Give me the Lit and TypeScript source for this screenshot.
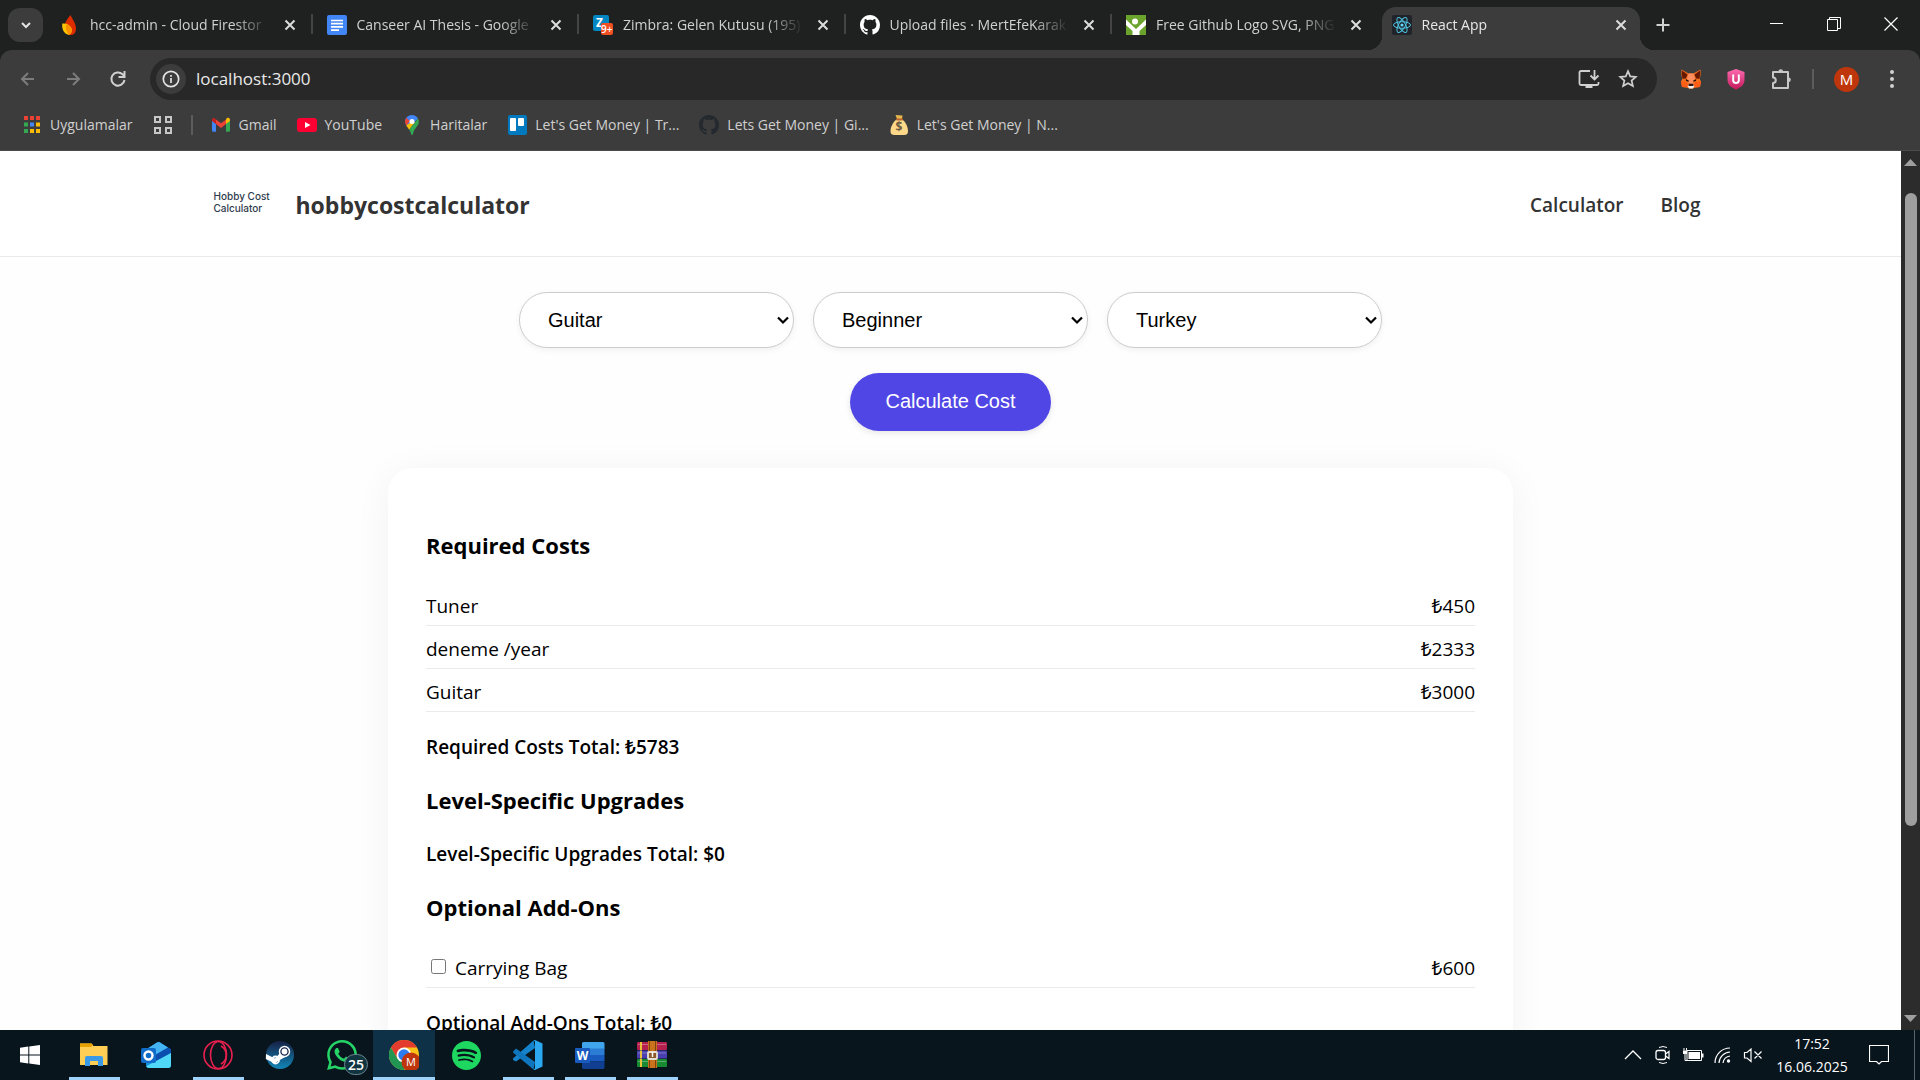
import { LitElement, html, css, svg, nothing, TemplateResult, SVGTemplateResult } from "lit";
import { customElement, state } from "lit/decorators.js";
import { classMap } from "lit/directives/class-map.js";

const icon = (w: number, h: number, viewBox: string, body: SVGTemplateResult): TemplateResult =>
  html`<svg class="icon" width=${w} height=${h} viewBox=${viewBox} aria-hidden="true">${body}</svg>`;

const GITHUB =
  "M8 0C3.58 0 0 3.58 0 8c0 3.54 2.29 6.53 5.47 7.59.4.07.55-.17.55-.38 0-.19-.01-.82-.01-1.49-2.01.37-2.53-.49-2.69-.94-.09-.23-.48-.94-.82-1.13-.28-.15-.68-.52-.01-.53.63-.01 1.08.58 1.23.82.72 1.21 1.87.87 2.33.66.07-.52.28-.87.51-1.07-1.78-.2-3.64-.89-3.64-3.95 0-.87.31-1.59.82-2.15-.08-.2-.36-1.02.08-2.12 0 0 .67-.21 2.2.82.64-.18 1.32-.27 2-.27s1.36.09 2 .27c1.53-1.04 2.2-.82 2.2-.82.44 1.1.16 1.92.08 2.12.51.56.82 1.27.82 2.15 0 3.07-1.87 3.75-3.65 3.95.29.25.54.73.54 1.48 0 1.07-.01 1.93-.01 2.2 0 .21.15.46.55.38A8.01 8.01 0 0 0 16 8c0-4.42-3.58-8-8-8z";

const firebase = icon(20, 20, "0 0 20 20", svg`
  <path d="M10.500 0C7 4 5 7.500 4.500 11c-.5 5 2 8.500 5.500 9 4 .3 6-2.500 6-6.500 0-5-3.500-9-5.500-13.500z" fill="#dd2c00"/>
  <path d="M2.300 8.500C1.500 14 4 19 8.500 19.800c2.500-.8 3.800-3 3.300-5.800C10.500 10 7 8 2.300 8.500z" fill="#ffc400"/>
  <path d="M6 9.200c3.500 1 5.500 3 5.800 5.300.2 2.500-1 4.500-2.800 5.400C6.500 17.500 5.200 13.500 6 9.200z" fill="#ff9100"/>`);
const docs = icon(20, 20, "0 0 20 20", svg`
  <rect width="20" height="20" rx="2" fill="#4285f4"/>
  <path d="M4 5.500h12M4 8.700h12M4 11.900h12M4 15.100h8" stroke="#fff" stroke-width="1.700"/>`);
const zimbra = icon(20, 20, "0 0 20 20", svg`
  <rect width="16" height="16" rx="2" fill="#0087c3"/>
  <text x="3" y="12" font-family="Open Sans, sans-serif" font-weight="700" font-size="12" fill="#fff">Z</text>
  <rect x="8" y="8" width="12" height="12" rx="2" fill="#f04e23"/>
  <text x="8" y="18" font-family="Open Sans, sans-serif" font-weight="600" font-size="10" fill="#fff">9+</text>`);
const githubIcon = (fill: string) => icon(20, 20, "0 0 16 16", svg`<path d=${GITHUB} fill=${fill}/>`);
const vecteezy = icon(20, 20, "0 0 20 20", svg`
  <rect width="20" height="20" fill="#6ba42c"/>
  <path d="M0 4.500L10 14l10-9.500V10l-6.500 6v4h-7v-4L0 10z" fill="#fff"/>
  <circle cx="9" cy="6.500" r="3" fill="#fff"/>`);
const react = icon(20, 20, "0 0 20 20", svg`
  <rect width="20" height="20" rx="2" fill="#20232a"/>
  <g fill="none" stroke="#4fc4e0" stroke-width="1">
    <ellipse cx="10" cy="10" rx="8.500" ry="3.300"/>
    <ellipse cx="10" cy="10" rx="8.500" ry="3.300" transform="rotate(60 10 10)"/>
    <ellipse cx="10" cy="10" rx="8.500" ry="3.300" transform="rotate(120 10 10)"/>
  </g><circle cx="10" cy="10" r="1.600" fill="#61dafb"/>`);

const cross = icon(20, 20, "0 0 20 20", svg`<path d="M5.500 5.500l9 9M14.500 5.500l-9 9" stroke="#dcdcdc" stroke-width="2"/>`);

const appsGrid = icon(20, 20, "0 0 20 20", svg`
  ${[["#ea4335", "#ea4335", "#ea4335"], ["#34a853", "#4285f4", "#fbbc04"], ["#34a853", "#fbbc04", "#fbbc04"]].map((row, r) =>
    row.map((c, i) => svg`<rect x=${2 + i * 6} y=${1 + r * 6.5} width="4" height="4" fill=${c}/>`))}`);
const tabGroups = icon(20, 20, "0 0 20 20", svg`
  <g fill="none" stroke="#c7c7c7" stroke-width="2"><path d="M2 2h5v5H2zM13 2h5v5h-5zM2 13h5v5H2zM13 13h5v5h-5z"/></g>`);
const gmail = icon(20, 20, "0 0 20 20", svg`
  <path d="M1 5.500v10c0 .7.500 1.200 1.200 1.200H5V9z" fill="#4285f4"/>
  <path d="M15 16.700h2.800c.7 0 1.200-.5 1.200-1.200v-10L15 9z" fill="#34a853"/>
  <path d="M15 4.500V9l4-3V4.800c0-1.800-2-2.500-3.300-1.500z" fill="#fbbc04"/>
  <path d="M5 9V4.500l5 3.800 5-3.800V9l-5 3.900z" fill="#ea4335"/>
  <path d="M1 4.800V6l4 3V4.500l-.7-.8C3 2.500 1 3 1 4.800z" fill="#c5221f"/>`);
const youtube = icon(20, 20, "0 0 20 20", svg`
  <rect y="3" width="20" height="14" rx="3" fill="#ff0033"/><path d="M8 7l5.500 3L8 13z" fill="#fff"/>`);
const maps = icon(20, 20, "0 0 20 20", svg`
  <path d="M10 0c2.500 0 4.800 1.200 6 3.500L7 13C5.500 10.800 3 9 3 6.500 3 3 6 0 10 0z" fill="#4285f4"/>
  <path d="M4.300 2.800L8 6l-3.800 4.500C3.300 9 2.900 7.500 3 6.300c.1-1.300.6-2.500 1.300-3.500z" fill="#ea4335"/>
  <path d="M7.800 8L4.200 10.500c.9 1.400 2 2.700 3 4.200L13 7z" fill="#fbbc04"/>
  <path d="M16 3.500c.7 1.200 1 2.500.8 4-.5 3.500-3.800 5.500-5.300 9.500-.4 1.200-.6 3-1.500 3s-1-1.500-1.500-3c-.4-1-.8-1.600-1.300-2.300z" fill="#34a853"/>
  <circle cx="10" cy="6.500" r="2.500" fill="#fff"/>`);
const trello = icon(20, 20, "0 0 20 20", svg`
  <rect x="1" width="19" height="20" rx="2" fill="#0079bf"/>
  <rect x="3" y="3" width="6" height="13" rx="1" fill="#fff"/><rect x="11" y="3" width="6" height="8" rx="1" fill="#fff"/>`);
const moneybag = icon(20, 20, "0 0 20 20", svg`
  <path d="M6.500 0l7 .5L13 4H8z" fill="#e6b74c"/><path d="M8 4h5c4 3.500 6 8 6 12 0 3-1.500 4-4 4H5.500C3 20 1.500 19 1.500 16c0-4 2.500-9 6.500-12z" fill="#fdd888"/>
  <rect x="7" y="3.500" width="7" height="2" rx="1" fill="#b8642f"/>
  <text x="6.500" y="16" font-family="Open Sans, sans-serif" font-weight="700" font-size="12" fill="#6b5c43">$</text>`);

interface Tab { title: string; icon: TemplateResult; active?: boolean }
const TABS: Tab[] = [
  { title: "hcc-admin - Cloud Firestor", icon: firebase },
  { title: "Canseer AI Thesis - Google", icon: docs },
  { title: "Zimbra: Gelen Kutusu (195)", icon: zimbra },
  { title: "Upload files · MertEfeKarak", icon: githubIcon("#fff") },
  { title: "Free Github Logo SVG, PNG", icon: vecteezy },
  { title: "React App", icon: react, active: true },
];

@customElement("browser-bar")
export class BrowserBar extends LitElement {
  static styles = css`
    :host { display: block; background: #1f2120; color: #d0d0d0; font: 14px/20px "Open Sans", "Noto Sans", sans-serif; }
    button { border: 0; background: none; padding: 0; display: grid; place-items: center; flex: none; color: inherit; font: inherit; }
    .icon { display: block; flex: none; }
    .strip { display: flex; height: 50px; }
    .search { width: 35px; height: 34px; margin: 8px 3px 0 8px; border-radius: 12px; background: #3c3c3c; }
    .tabs { display: flex; flex: 0 1 1599px; min-width: 0; }
    .tab { display: flex; align-items: center; flex: 1 1 0; min-width: 0; height: 50px; box-sizing: border-box; padding: 0 11px 0 14px; }
    .tab.ruled { border-right: 2px solid; border-image: linear-gradient(transparent 14px, #444 14px, #444 34px, transparent 34px) 1; }
    .title { flex: 1; min-width: 0; margin: 0 10px; white-space: nowrap; overflow: hidden; -webkit-mask-image: linear-gradient(90deg, #000 80%, transparent); }
    .tab.active { position: relative; margin: 7px 5px 0 5px; padding: 0 9px 14px 10px; background: #3c3c3c; border-radius: 14px 14px 0 0; color: #e8e8e8; }
    .tab.active::before, .tab.active::after { content: ""; position: absolute; bottom: 7px; width: 14px; height: 14px; }
    .tab.active::before { right: 100%; background: radial-gradient(circle at 0 0, transparent 14px, #3c3c3c 14px); }
    .tab.active::after { left: 100%; background: radial-gradient(circle at 100% 0, transparent 14px, #3c3c3c 14px); }
    .plus { width: 36px; height: 50px; }
    .controls { display: flex; margin: 0 1px 0 auto; }
    .controls button { width: 57px; height: 48px; }
    .panel { background: #3c3c3c; border-radius: 12px 12px 0 0; border-bottom: 1px solid #4a4a4a; }
    .toolbar { display: flex; align-items: center; height: 58px; padding: 0 9px 0 5px; }
    .toolbar button { width: 45px; height: 42px; }
    .address { display: flex; align-items: center; flex: 1; height: 42px; margin: 0 11px 0 10px; padding: 0 10px 0 6px; box-sizing: border-box; border-radius: 21px; background: #282828; }
    .toolbar .info { width: 30px; height: 30px; border-radius: 15px; background: #3c3c3c; }
    .toolbar .small { width: 39px; }
    .url { flex: 1; min-width: 0; margin-left: 10px; padding: 0; border: 0; outline: 0; background: none; color: #e8e8e8; font: 17px/24px "Open Sans", "Noto Sans", sans-serif; }
    .rule { width: 2px; height: 20px; background: #5c5c5c; }
    .toolbar .rule { margin: 0 9px; }
    .toolbar .avatar { width: 25px; height: 25px; margin: 0 13px 0 11px; border-radius: 13px; background: #bf360c; color: #fff; font-size: 15px; }
    .marks { display: flex; align-items: center; height: 42px; box-sizing: border-box; gap: 20px; padding: 0 22px 8px; }
    .marks .rule { margin: 0 -2px; }
    .marks a { display: flex; align-items: center; gap: 8px; color: #d0d0d0; text-decoration: none; white-space: nowrap; }
  `;

  render() {
    return html`
      <div class="strip">
        <button class="search" aria-label="Search tabs">${icon(16, 16, "0 0 16 16", svg`<path d="M4 6l4 4 4-4" fill="none" stroke="#e3e3e3" stroke-width="2"/>`)}</button>
        <div class="tabs">
          ${TABS.map((t, i) => html`<div class=${classMap({ tab: true, active: !!t.active, ruled: i < 4 })}>
            ${t.icon}<span class="title">${t.title}</span><button aria-label="Close tab">${cross}</button></div>`)}
        </div>
        <button class="plus" aria-label="New tab">${icon(20, 20, "0 0 20 20", svg`<path d="M10 3.500v13M3.500 10h13" stroke="#d0d0d0" stroke-width="2"/>`)}</button>
        <div class="controls">
          <button aria-label="Minimize">${icon(14, 14, "0 0 14 14", svg`<path d="M0 6.500h13" stroke="#fff"/>`)}</button>
          <button aria-label="Restore">${icon(14, 14, "0 0 14 14", svg`<path d="M.5 2.500h10v11H.5zM2.500 2.500v-2h11v11h-3" fill="none" stroke="#fff"/>`)}</button>
          <button aria-label="Close window">${icon(14, 14, "0 0 14 14", svg`<path d="M.5.5l13 13M13.500.5l-13 13" stroke="#fff" stroke-width="1.200"/>`)}</button>
        </div>
      </div>
      <div class="panel">
        <div class="toolbar">
          <button aria-label="Back">${icon(20, 20, "0 0 20 20", svg`<path d="M16 10H4M10 4l-6 6 6 6" fill="none" stroke="#7c7c7c" stroke-width="2"/>`)}</button>
          <button aria-label="Forward">${icon(20, 20, "0 0 20 20", svg`<path d="M4 10h12M10 4l6 6-6 6" fill="none" stroke="#7c7c7c" stroke-width="2"/>`)}</button>
          <button aria-label="Reload">${icon(20, 20, "0 0 20 20", svg`<path d="M16.500 11a6.600 6.600 0 1 1-2-5.800L16.500 7.500M16.500 2v6h-6" fill="none" stroke="#d0d0d0" stroke-width="2"/>`)}</button>
          <div class="address">
            <button class="info" aria-label="Site information">${icon(20, 20, "0 0 20 20", svg`<circle cx="10" cy="10" r="7.700" fill="none" stroke="#e3e3e3" stroke-width="1.700"/><path d="M10 9v5M10 6v1.800" stroke="#e3e3e3" stroke-width="1.700"/>`)}</button>
            <input class="url" aria-label="Address" value="localhost:3000" />
            <button class="small" aria-label="Install app">${icon(22, 20, "0 0 22 20", svg`<path d="M12 2H3a1.500 1.500 0 0 0-1.500 1.500v11A1.500 1.500 0 0 0 3 16h16a1.500 1.500 0 0 0 1.500-1.500V13M16.500 1v9M12.500 6.500l4 4 4-4" fill="none" stroke="#d0d0d0" stroke-width="1.800"/><path d="M7.500 16h7v3h-7z" fill="#d0d0d0"/>`)}</button>
            <button class="small" aria-label="Bookmark">${icon(20, 20, "0 0 20 20", svg`<path d="M10 2.200l2.200 5.200 5.600.5-4.200 3.700 1.300 5.500L10 14.200l-4.900 2.900 1.300-5.500L2.200 7.900l5.600-.5z" fill="none" stroke="#d0d0d0" stroke-width="1.700"/>`)}</button>
          </div>
          <button aria-label="MetaMask">${icon(20, 20, "0 0 20 20", svg`
            <path d="M.5.5L7.500 4.500h5l7-4 .2 5-1 4.500 1.300 2.500-1 5.500-4.500.5L12 19.500H8L5.500 18.500 1 18l-1-5.500L1.300 10l-1-4.500z" fill="#f5701f"/>
            <path d="M1 1.500l5.500 4-1.500 4-3.500.3L.8 5.500zM19 1.500l-5.500 4 1.500 4 3.500.3.700-4.300z" fill="#661800"/>
            <path d="M7.500 4.500h5l1.300 5L12 15H8L6.200 9.500z" fill="#ff8d5d"/>
            <path d="M4.800 10l3.200 1.800-.5 1-2.500-.8zM15.200 10L12 11.800l.5 1 2.500-.8z" fill="#2b120c"/>
            <path d="M0 12.500l5.500.5L8 17l-2.500 1.500L1 18zM20 12.500l-5.500.5L12 17l2.500 1.500 4.500-.5z" fill="#ff5c16"/>
            <path d="M6.500 17L8 15.500h4l1.500 1.500-1.700 2.500H8.200z" fill="#f3ece9"/><path d="M7.800 14.800h4.400L12.500 17h-5z" fill="#2b1712"/>`)}</button>
          <button aria-label="Shield">${icon(18, 22, "0 0 18 22", svg`
            <defs><linearGradient id="pink" x2="0" y2="1"><stop stop-color="#ff6bb0"/><stop offset="1" stop-color="#c2185b"/></linearGradient></defs>
            <path d="M9 1l8.500 3v8c0 5-4 7.500-8.500 9.700C4.500 19.500.5 17 .5 12V4z" fill="url(#pink)"/>
            <path d="M6.200 6.500v5.700a2.800 2.800 0 0 0 5.600 0V6.500" fill="none" stroke="#fff" stroke-width="2"/>`)}</button>
          <button aria-label="Extensions">${icon(22, 22, "0 0 22 22", svg`<path d="M3 4h15v16H3v-5a2.800 2.800 0 0 0 0-5.600z" fill="none" stroke="#c7c7c7" stroke-width="2" stroke-linejoin="round"/><path d="M8.500 3.500a2.300 2.300 0 0 1 4.600 0zM18.500 9.500v4.600a2.300 2.300 0 0 0 0-4.600z" fill="#c7c7c7"/>`)}</button>
          <div class="rule"></div>
          <button class="avatar" aria-label="Profile">M</button>
          <button class="small" aria-label="Menu">${icon(20, 20, "0 0 20 20", svg`<g fill="#d0d0d0"><circle cx="10" cy="3" r="2"/><circle cx="10" cy="10" r="2"/><circle cx="10" cy="17" r="2"/></g>`)}</button>
        </div>
        <nav class="marks" aria-label="Bookmarks">
          <a href="#">${appsGrid}Uygulamalar</a>
          <button aria-label="Tab groups">${tabGroups}</button>
          <div class="rule"></div>
          <a href="#">${gmail}Gmail</a>
          <a href="#">${youtube}YouTube</a>
          <a href="#">${maps}Haritalar</a>
          <a href="#">${trello}Let's Get Money | Tr...</a>
          <a href="#">${githubIcon("#24292f")}Lets Get Money | Gi...</a>
          <a href="#">${moneybag}Let's Get Money | N...</a>
        </nav>
      </div>`;
  }
}

interface Cost { name: string; price: string }
const REQUIRED: Cost[] = [
  { name: "Tuner", price: "₺450" },
  { name: "deneme /year", price: "₺2333" },
  { name: "Guitar", price: "₺3000" },
];
const CHOICES = [
  { label: "Hobby", options: ["Guitar"] },
  { label: "Level", options: ["Beginner"] },
  { label: "Country", options: ["Turkey"] },
];

@customElement("cost-page")
export class CostPage extends LitElement {
  static styles = css`
    :host { display: flex; min-height: 0; overflow: hidden; background: #fefefe; color: #000; font: 19px/26px "Open Sans", "Noto Sans", sans-serif; }
    .page { flex: 1; min-width: 0; }
    .header { background: #fff; border-bottom: 1px solid #eaeaea; }
    .inner { display: flex; align-items: center; height: 105px; max-width: 1500px; margin: 0 auto; box-sizing: border-box; padding: 2px 0 0 13px; color: #333; }
    .logo { width: 82px; padding-bottom: 6px; color: #2f3b4c; font: 500 10px/12px Inter, sans-serif; }
    .brand { flex: 1; font-size: 23px; line-height: 32px; font-weight: 700; }
    .nav { display: flex; gap: 37px; }
    .nav a { color: #333; text-decoration: none; font-weight: 600; }
    .choices { display: flex; flex-wrap: wrap; justify-content: center; gap: 19px; padding: 35px 0 25px; }
    .choice { display: grid; width: 275px; }
    .choice > * { grid-area: 1 / 1; }
    .choice select { appearance: none; height: 56px; padding: 0 28px; border: 1px solid #ccc; border-radius: 28px; background: #fff; color: #000; box-shadow: 0 2px 6px rgba(0, 0, 0, 0.06); font: 20px/24px "Liberation Sans", Arial, sans-serif; }
    .choice .icon { place-self: center end; margin-right: 5px; pointer-events: none; }
    .calc { display: block; height: 58px; margin: 0 auto 37px; padding: 0 35px 2px; border: 0; border-radius: 29px; background: #4f46e5; color: #fff; box-shadow: 0 2px 6px rgba(0, 0, 0, 0.1); font: 20px/24px "Liberation Sans", Arial, sans-serif; }
    .card { max-width: 1125px; margin: 0 auto; box-sizing: border-box; padding: 61px 38px 60px; border-radius: 25px; background: #fff; box-shadow: 0 5px 38px rgba(0, 0, 0, 0.05); }
    h3 { margin: 0; font-size: 22px; line-height: 32px; font-weight: 700; }
    .list { margin: 22px 0 0; padding: 0; list-style: none; }
    .list li { display: flex; justify-content: space-between; padding: 10px 0 6px; border-bottom: 1px solid #eaeaea; }
    .total { margin: 22px 0 24px; font-weight: 600; }
    h3 + .total { margin-top: 25px; }
    .addon { display: flex; align-items: center; gap: 9px; }
    .addon input { width: 15px; height: 15px; margin: 0 0 4px 5px; }
    .scroll { display: flex; flex-direction: column; align-items: center; justify-content: space-between; width: 19px; padding: 8px 0; box-sizing: border-box; background: #2c2c2c; }
    .track { flex: 1; width: 12px; padding-top: 27px; }
    .thumb { height: 77%; border-radius: 6px; background: #9f9f9f; }
  `;

  @state() private carryingBag = false;

  render() {
    return html`
      <div class="page">
        <header class="header"><div class="inner">
          <div class="logo">Hobby Cost<br />Calculator</div>
          <div class="brand">hobbycostcalculator</div>
          <nav class="nav"><a href="#">Calculator</a><a href="#">Blog</a></nav>
        </div></header>
        <div class="choices">
          ${CHOICES.map((c) => html`<label class="choice">
            <select aria-label=${c.label}>${c.options.map((o) => html`<option>${o}</option>`)}</select>
            ${icon(12, 10, "0 0 12 10", svg`<path d="M1 2.500l5 5 5-5" fill="none" stroke="#000" stroke-width="2.200"/>`)}
          </label>`)}
        </div>
        <button class="calc">Calculate Cost</button>
        <main class="card">
          <h3>Required Costs</h3>
          <ul class="list">${REQUIRED.map((c) => html`<li><span>${c.name}</span><span>${c.price}</span></li>`)}</ul>
          <p class="total">Required Costs Total: ₺5783</p>
          <h3>Level-Specific Upgrades</h3>
          <p class="total">Level-Specific Upgrades Total: $0</p>
          <h3>Optional Add-Ons</h3>
          <ul class="list"><li>
            <label class="addon"><input type="checkbox" .checked=${this.carryingBag}
              @change=${() => (this.carryingBag = !this.carryingBag)} />Carrying Bag</label>
            <span>₺600</span>
          </li></ul>
          <p class="total">Optional Add-Ons Total: ${this.carryingBag ? "₺600" : "₺0"}</p>
        </main>
      </div>
      <div class="scroll" aria-hidden="true">
        ${icon(13, 7, "0 0 13 7", svg`<path d="M0 7L6.500 0 13 7z" fill="#9f9f9f"/>`)}
        <div class="track"><div class="thumb"></div></div>
        ${icon(13, 7, "0 0 13 7", svg`<path d="M0 0l6.500 7L13 0z" fill="#9f9f9f"/>`)}
      </div>`;
  }
}

const WHATSAPP =
  "M17.472 14.382c-.297-.149-1.758-.867-2.030-.967-.273-.099-.471-.148-.67.15-.197.297-.767.966-.94 1.164-.173.199-.347.223-.644.075-.297-.15-1.255-.463-2.390-1.475-.883-.788-1.480-1.761-1.653-2.059-.173-.297-.018-.458.13-.606.134-.133.298-.347.446-.52.149-.174.198-.298.298-.497.099-.198.05-.371-.025-.52-.075-.149-.669-1.612-.916-2.207-.242-.579-.487-.5-.669-.51-.173-.008-.371-.01-.57-.01-.198 0-.52.074-.792.372-.272.297-1.040 1.016-1.040 2.479 0 1.462 1.065 2.875 1.213 3.074.149.198 2.096 3.200 5.077 4.487.709.306 1.262.489 1.694.625.712.227 1.360.195 1.871.118.571-.085 1.758-.719 2.006-1.413.248-.694.248-1.289.173-1.413-.074-.124-.272-.198-.57-.347m-5.421 7.403h-.004a9.870 9.870 0 0 1-5.031-1.378l-.361-.214-3.741.982.998-3.648-.235-.374a9.860 9.860 0 0 1-1.510-5.260c.001-5.450 4.436-9.884 9.888-9.884 2.640 0 5.122 1.030 6.988 2.898a9.825 9.825 0 0 1 2.893 6.994c-.003 5.450-4.437 9.884-9.885 9.884m8.413-18.297A11.815 11.815 0 0 0 12.050 0C5.495 0 .16 5.335.157 11.892c0 2.096.547 4.142 1.588 5.945L.057 24l6.305-1.654a11.882 11.882 0 0 0 5.683 1.448h.005c6.554 0 11.890-5.335 11.893-11.893a11.821 11.821 0 0 0-3.480-8.413z";
const SPOTIFY =
  "M12 0C5.400 0 0 5.400 0 12s5.400 12 12 12 12-5.400 12-12S18.660 0 12 0zm5.521 17.340c-.24.359-.66.48-1.021.24-2.820-1.740-6.360-2.101-10.561-1.141-.418.122-.779-.179-.899-.539-.12-.421.18-.78.54-.9 4.560-1.021 8.520-.6 11.640 1.320.42.18.479.659.301 1.020zm1.440-3.300c-.301.42-.841.6-1.262.3-3.239-1.980-8.159-2.580-11.939-1.380-.479.12-1.020-.12-1.140-.6-.12-.48.12-1.021.6-1.141C9.600 9.900 15 10.561 18.720 12.840c.361.181.54.78.241 1.200zm.12-3.360C15.240 8.400 8.820 8.160 5.160 9.301c-.6.179-1.200-.181-1.380-.721-.18-.601.18-1.200.72-1.381 4.260-1.260 11.280-1.020 15.721 1.621.539.3.719 1.020.419 1.560-.299.421-1.020.599-1.559.3z";

interface TaskApp { name: string; art: TemplateResult; open?: boolean; focused?: boolean; badge?: string }
const APPS: TaskApp[] = [
  { name: "File Explorer", open: true, art: icon(30, 30, "0 0 30 30", svg`
    <path d="M1 3.500h11.500L14.500 6H28.500V25H1z" fill="#ffcf55"/>
    <path d="M1 3.500h11.500L14 5 12 7H1z" fill="#e8a200"/><path d="M6 26V18a2 2 0 0 1 2-2h14a2 2 0 0 1 2 2v8h-5v-5h-8v5z" fill="#3a9ae8"/>`) },
  { name: "Outlook", art: icon(30, 30, "0 0 30 30", svg`
    <path d="M5 9.500L16 2.500q1.500-1 3 0L30 9.500V25a3 3 0 0 1-3 3H8a3 3 0 0 1-3-3z" fill="#1490df"/>
    <path d="M16 2.500q1.500-1 3 0L27 7.500 14 15 5 9.500z" fill="#45b4f2"/><path d="M27 7.500l3 2V13L15 22v-7.500z" fill="#0b4fae"/>
    <path d="M30 13v12a3 3 0 0 1-3 3H8q-2 0-2.800-1.700z" fill="#4fd8f7"/>
    <rect y="8" width="15" height="15" rx="2" fill="#0f6cc9"/><circle cx="7.500" cy="15.500" r="4" fill="none" stroke="#fff" stroke-width="2.400"/>`) },
  { name: "Opera", open: true, art: icon(30, 30, "0 0 30 30", svg`
    <g fill="none" stroke="#e8204e" stroke-width="1.600"><circle cx="15" cy="15" r="14"/><ellipse cx="15.500" cy="15" rx="8" ry="13.500"/><path d="M18 6c7 4 7 14 0 18"/></g>`) },
  { name: "Steam", art: icon(30, 30, "0 0 30 30", svg`
    <defs><linearGradient id="steam" x2="0" y2="1"><stop stop-color="#172044"/><stop offset="1" stop-color="#1287b8"/></linearGradient></defs>
    <circle cx="15" cy="15" r="14" fill="url(#steam)"/><path d="M1 14l9 4.500L16 12l6 4-9 5-3 2.500L.8 19z" fill="#fff"/>
    <circle cx="19.500" cy="11.500" r="5" fill="#1a2a50" stroke="#fff" stroke-width="1.500"/><circle cx="19.500" cy="11.500" r="2.900" fill="#fff"/>
    <circle cx="10.500" cy="20" r="3.500" fill="none" stroke="#fff" stroke-width="1.800"/>`) },
  { name: "WhatsApp", badge: "25", art: icon(30, 30, "0 0 24 24", svg`<path d=${WHATSAPP} fill="#25d366"/>`) },
  { name: "Chrome", open: true, focused: true, art: icon(30, 30, "0 0 30 30", svg`
    <circle cx="15" cy="15" r="15" fill="#fbc116"/>
    <path d="M2 7.500A15 15 0 0 1 28 7.500H15L8.500 18.700z" fill="#e33b2e"/><path d="M2 7.500A15 15 0 0 0 15 30l6.500-11.300H8.500z" fill="#219653"/>
    <circle cx="15" cy="15" r="7.500" fill="#fff"/><circle cx="15" cy="15" r="5.700" fill="#2b7cf0"/>
    <circle cx="22" cy="22" r="9.500" fill="#bf360c"/>
    <text x="22" y="26" text-anchor="middle" font-family="Open Sans, sans-serif" font-size="11" fill="#fff">M</text>`) },
  { name: "Spotify", art: icon(29, 29, "0 0 24 24", svg`<path d=${SPOTIFY} fill="#1ed760"/>`) },
  { name: "Visual Studio Code", open: true, art: icon(30, 30, "0 0 30 30", svg`
    <path d="M0 18.500L20.500.5 22 8 3 21.500 0 20z" fill="#1583cc"/>
    <path d="M0 11.500L3 8.500 22 22l-1.500 7.500L0 12.500z" fill="#0f76bd"/><path d="M20.500.3q1-.6 2 0L29.500 3.500v23l-7 3.200q-1 .5-2 0 1.500-.7 1.500-2.200V2.500Q22 1 20.500.3z" fill="#2ba8ef"/>`) },
  { name: "Word", open: true, art: icon(30, 30, "0 0 30 30", svg`
    <path d="M8.500 2H28a1.500 1.500 0 0 1 1.500 1.500V9H7V3.500A1.500 1.500 0 0 1 8.500 2z" fill="#41a5ee"/><path d="M7 8.500h22.500v6.500H7z" fill="#2b7cd3"/>
    <path d="M7 15h22.500v6.500H7z" fill="#185abd"/><path d="M7 21.500h22.500v6A1.500 1.500 0 0 1 28 29H8.500A1.500 1.500 0 0 1 7 27.500z" fill="#103f91"/>
    <rect y="8" width="15" height="15" rx="1" fill="#185abd"/>
    <text x="7.500" y="20" text-anchor="middle" font-family="Open Sans, sans-serif" font-weight="700" font-size="12" fill="#fff">W</text>`) },
  { name: "WinRAR", open: true, art: icon(30, 30, "0 0 30 30", svg`
    <rect y="2" width="30" height="8" rx="1" fill="#b5204e"/><rect y="10.500" width="30" height="8" rx="1" fill="#4a3fb0"/><rect y="19" width="30" height="8" rx="1" fill="#188a32"/>
    <path d="M1 4.500h28M1 13h28M1 21.500h28" stroke="#fff" stroke-opacity=".3"/><path d="M4 2v8M4 10.500v8M4 19v8" stroke="#e9c23c" stroke-width="2"/>
    <rect x="11" y="1" width="9" height="27" fill="#c9741d"/><path d="M12.500 1v27M18.500 1v27" stroke="#7c4210"/>
    <rect x="11" y="12" width="9" height="7" rx="1" fill="#8b5a2b" stroke="#e4e0d6" stroke-width="1.800"/><path d="M15.500 12v5" stroke="#fff" stroke-width="1.500"/>`) },
];

@customElement("task-bar")
export class TaskBar extends LitElement {
  static styles = css`
    :host { display: flex; height: 50px; background: #08151d; color: #fff; font: 14px/23px "Open Sans", "Noto Sans", sans-serif; }
    button { display: grid; place-items: center; height: 50px; padding: 0; border: 0; background: none; color: inherit; font: inherit; }
    .icon { display: block; }
    .start { width: 60px; margin-right: 3px; }
    .app { position: relative; width: 62px; }
    .app.open::after { content: ""; position: absolute; left: 6px; right: 5px; bottom: 0; height: 3px; background: #9fd2fa; }
    .app.focused { background: #0f3147; }
    .app.focused::after { left: 0; right: 0; }
    .badge { position: absolute; left: 33px; top: 24px; width: 22px; height: 19px; border: 1px solid #6d8791; border-radius: 11px; background: #103440; font-size: 14px; line-height: 19px; font-weight: 600; text-align: center; }
    .tray { display: flex; align-items: center; margin-left: auto; }
    .tray button { width: 30px; }
    .tray .clock { width: 88px; align-content: center; text-align: center; }
    .tray .notes { width: 45px; }
    .peek { width: 5px; height: 50px; margin-left: 13px; border-left: 1px solid #59636a; }
  `;

  render() {
    return html`
      <button class="start" aria-label="Start">${icon(20, 20, "0 0 20 20", svg`<path d="M0 2.800l8.300-1.200v7.900H0zM9.300 1.400L20 0v9.500H9.300zM0 10.500h8.300v8L0 17.300zM9.300 10.500H20V20L9.300 18.600z" fill="#fff"/>`)}</button>
      ${APPS.map((a) => html`<button class=${classMap({ app: true, open: !!a.open, focused: !!a.focused })} aria-label=${a.name}>
        ${a.art}${a.badge ? html`<span class="badge">${a.badge}</span>` : nothing}</button>`)}
      <div class="tray">
        <button aria-label="Show hidden icons">${icon(18, 18, "0 0 18 18", svg`<path d="M1 13l8-8 8 8" fill="none" stroke="#fff" stroke-width="1.300"/>`)}</button>
        <button aria-label="Meet now">${icon(18, 20, "0 0 18 20", svg`<path d="M5 2.500q4-2 8 0M5 17.500q4 2 8 0" fill="none" stroke="#fff"/><rect x="2" y="5.500" width="9.500" height="9" rx="2" fill="none" stroke="#fff" stroke-width="1.300"/><path d="M11.500 9l3.500-2.500v7L11.500 11" fill="none" stroke="#fff" stroke-width="1.200"/>`)}</button>
        <button aria-label="Battery">${icon(22, 18, "0 0 22 18", svg`<path d="M5 4.500h14.500v10H5z" fill="none" stroke="#fff"/><path d="M6.500 6h11.500v7H6.500zM20 7.500h1.500v4H20zM1 4.500h4v3.500H1z" fill="#fff"/><path d="M2 4.500V2M4.500 4.500V2M3 8v6.500h2" stroke="#fff" fill="none"/>`)}</button>
        <button aria-label="Network">${icon(18, 18, "0 0 18 18", svg`<g fill="none" stroke="#fff" stroke-width="1.200"><path d="M1 17A15 15 0 0 1 16 2M5 17A11.500 11.500 0 0 1 16 6M9 17a8 8 0 0 1 7-7"/></g><circle cx="14.500" cy="15" r="1.700" fill="#fff"/>`)}</button>
        <button aria-label="Volume muted">${icon(20, 18, "0 0 20 18", svg`<path d="M1.500 6.500H4L8 3v12.500L4 12H1.500zM11.500 5.500l7 7M18.500 5.500l-7 7" fill="none" stroke="#fff" stroke-width="1.200"/>`)}</button>
        <button class="clock"><span>17:52</span><span>16.06.2025</span></button>
        <button class="notes" aria-label="Notifications">${icon(20, 20, "0 0 20 20", svg`<path d="M.5.5h19v16h-7L10 19l-2.500-2.500h-7z" fill="none" stroke="#fff" stroke-width="1.200"/>`)}</button>
        <div class="peek"></div>
      </div>`;
  }
}

@customElement("app-root")
export class AppRoot extends LitElement {
  static styles = css`
    :host { display: grid; grid-template-rows: auto minmax(0, 1fr) auto; height: 100vh; overflow: hidden; }
  `;

  render() {
    return html`<browser-bar></browser-bar><cost-page></cost-page><task-bar></task-bar>`;
  }
}
